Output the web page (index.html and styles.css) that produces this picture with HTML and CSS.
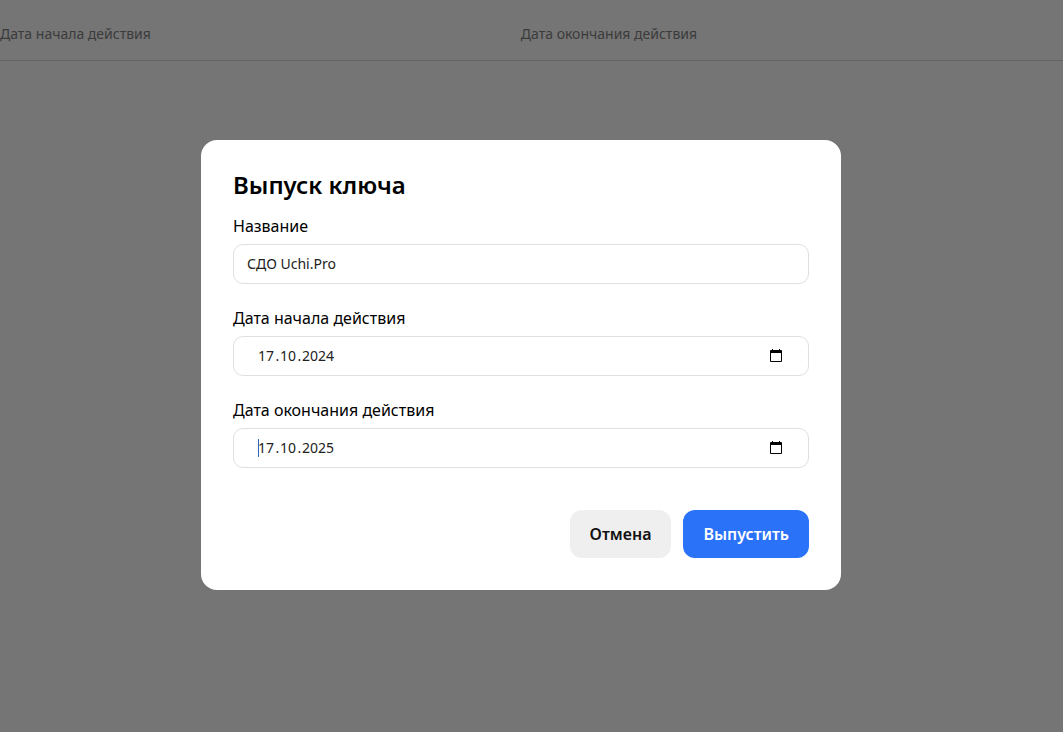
FILE: index.html
```html
<!DOCTYPE html>
<html lang="ru">
<head>
<meta charset="utf-8">
<title>Выпуск ключа</title>
<link rel="stylesheet" href="styles.css">
</head>
<body>
<table class="keys">
  <thead>
    <tr><th class="keys-start" scope="col">Дата начала действия</th><th scope="col">Дата окончания действия</th></tr>
  </thead>
</table>
<div class="overlay">
  <form class="modal" role="dialog" aria-labelledby="modal-title">
    <h2 class="modal-title" id="modal-title">Выпуск ключа</h2>
    <div class="fields">
      <div class="field">
        <label for="name">Название</label>
        <input class="input" id="name" type="text" value="СДО Uchi.Pro">
      </div>
      <div class="field">
        <label for="start">Дата начала действия</label>
        <div class="input date">
          <input class="part" id="start" type="text" inputmode="numeric" maxlength="2" value="17">
          <span class="dot">.</span>
          <input class="part" type="text" inputmode="numeric" maxlength="2" aria-label="Месяц начала" value="10">
          <span class="dot">.</span>
          <input class="part part-year" type="text" inputmode="numeric" maxlength="4" aria-label="Год начала" value="2024">
          <button class="picker" type="button" aria-label="Открыть календарь">
            <svg viewBox="0 0 12 13" width="12" height="13"><path d="M2 0h1v1h6V0h1v1h1q1 0 1 1v10q0 1-1 1H1q-1 0-1-1V2q0-1 1-1h1zM1 4v8h10V4z" fill="#000" fill-rule="evenodd"/></svg>
          </button>
        </div>
      </div>
      <div class="field">
        <label for="end">Дата окончания действия</label>
        <div class="input date">
          <span class="caret"></span>
          <input class="part" id="end" type="text" inputmode="numeric" maxlength="2" value="17">
          <span class="dot">.</span>
          <input class="part" type="text" inputmode="numeric" maxlength="2" aria-label="Месяц окончания" value="10">
          <span class="dot">.</span>
          <input class="part part-year" type="text" inputmode="numeric" maxlength="4" aria-label="Год окончания" value="2025">
          <button class="picker" type="button" aria-label="Открыть календарь">
            <svg viewBox="0 0 12 13" width="12" height="13"><path d="M2 0h1v1h6V0h1v1h1q1 0 1 1v10q0 1-1 1H1q-1 0-1-1V2q0-1 1-1h1zM1 4v8h10V4z" fill="#000" fill-rule="evenodd"/></svg>
          </button>
        </div>
      </div>
    </div>
    <div class="actions">
      <button class="button" type="button">Отмена</button>
      <button class="button button-primary" type="submit">Выпустить</button>
    </div>
  </form>
</div>
</body>
</html>
```
FILE: styles.css
```css
* { box-sizing: border-box; }
body {
  margin: 0;
  background: #757575;
  color: #000;
  font-family: "Noto Sans", "Open Sans", sans-serif;
  font-size: 16px;
}
.keys {
  width: 100%;
  border-collapse: collapse;
  table-layout: fixed;
}
.keys th {
  padding: 24px 0 16px;
  border-bottom: 1px solid #646464;
  color: #3b3b3b;
  font-size: 14px;
  font-weight: 400;
  line-height: 20px;
  text-align: left;
}
.keys .keys-start { width: 49%; }
.overlay {
  position: fixed;
  inset: 0;
  display: flex;
  align-items: center;
  justify-content: center;
  padding: 0 21px 2px 0;
}
.modal {
  width: 100%;
  max-width: 640px;
  padding: 31px 32px 32px;
  border-radius: 16px;
  background: #fff;
}
.modal-title {
  margin: 0 0 15px;
  font-size: 24px;
  font-weight: 600;
  line-height: 28px;
}
.fields {
  display: flex;
  flex-direction: column;
  gap: 22px;
}
.field {
  display: flex;
  flex-direction: column;
  gap: 6px;
  line-height: 24px;
}
.input {
  width: 100%;
  height: 40px;
  padding: 0 13px 1px;
  border: 1px solid #dfdfdf;
  border-radius: 10px;
  background: #fff;
  color: #222;
  font: 400 14px "Noto Sans", "Open Sans", sans-serif;
  outline: none;
}
.date {
  position: relative;
  display: flex;
  align-items: center;
  padding: 0 26px 2px 24px;
}
.part {
  width: 17px;
  padding: 0;
  border: 0;
  background: none;
  color: inherit;
  font: inherit;
  outline: none;
}
.part-year { width: 33px; }
.dot {
  width: 5px;
  text-align: center;
}
.picker {
  display: flex;
  margin-left: auto;
  padding: 0;
  border: 0;
  background: none;
}
.caret {
  position: absolute;
  top: 10px;
  left: 24px;
  width: 1px;
  height: 18px;
  background: #2864b8;
}
.actions {
  display: flex;
  justify-content: flex-end;
  gap: 12px;
  margin-top: 42px;
}
.button {
  height: 48px;
  padding: 0 20px;
  border: 0;
  border-radius: 12px;
  background: #efefef;
  color: #111;
  font: 600 16px "Noto Sans", "Open Sans", sans-serif;
}
.button-primary {
  background: #2a72f8;
  color: #fff;
}
```
